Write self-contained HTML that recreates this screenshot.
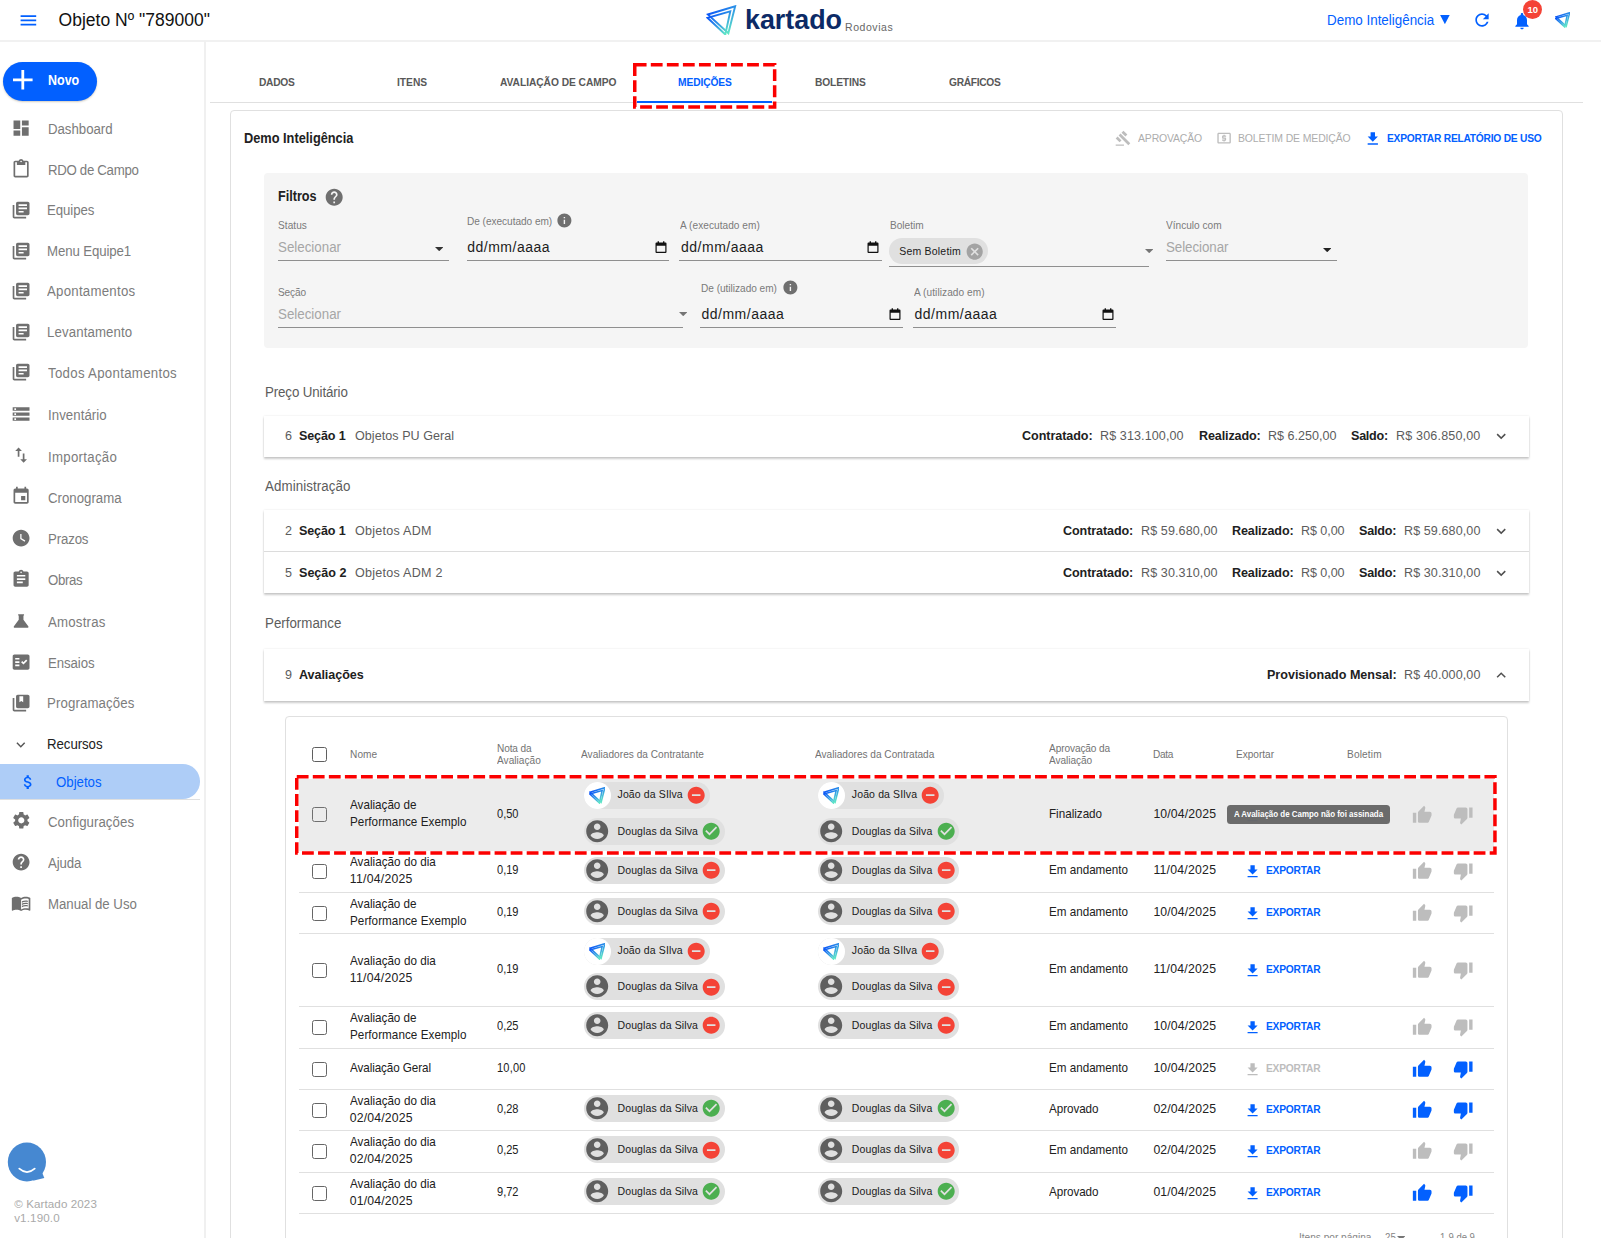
<!DOCTYPE html>
<html lang="pt-BR"><head><meta charset="utf-8"><title>Kartado - Objeto Nº "789000"</title>
<style>
html,body{margin:0;padding:0}
body{width:1601px;height:1238px;overflow:hidden;position:relative;background:#fff;font-family:"Liberation Sans",sans-serif;color:#212121}
#app div,#app span,#app svg{position:absolute}
#app div{box-sizing:border-box}
#app span{white-space:pre;transform-origin:0 50%}
#app{position:absolute;left:0;top:0;width:1601px;height:1238px;overflow:hidden}
</style></head>
<body>
<svg width="0" height="0" style="position:absolute"><defs><linearGradient id="lg" x1="0.05" y1="0.25" x2="0.75" y2="1"><stop offset="0" stop-color="#0b57f7"/><stop offset="0.5" stop-color="#2f97e6"/><stop offset="1" stop-color="#5fe6c6"/></linearGradient></defs></svg>
<div id="app">
<div style="left:0px;top:40px;width:1601px;height:2px;background:#f1f1f1"></div>
<svg style="left:17.8px;top:9.9px;" width="20.8" height="20.8" viewBox="0 0 24 24" fill="#0260ff"><path d="M3 18h18v-2H3v2zm0-5h18v-2H3v2zm0-7v2h18V6H3z"/></svg>
<span style="top:10px;font-size:17.5px;line-height:20px;left:58.6px;color:#111;letter-spacing:0.01px;">Objeto Nº "789000"</span>
<svg style="left:706.3px;top:4.9px" width="30.6" height="30.6" viewBox="0 0 32 32" fill="none" stroke="url(#lg)" stroke-width="2" stroke-linejoin="miter"><polygon points="1.900,9.900 30.500,1.300 23.400,29.600"/><polygon points="1.500,13.400 25.400,6.700 20.200,30.900"/></svg>
<span style="top:4px;font-size:28px;line-height:31px;left:744.5px;transform:scaleX(0.959);font-weight:700;color:#0c2a66;">kartado</span>
<span style="top:21px;font-size:10.5px;line-height:12px;left:845px;color:#666;letter-spacing:0.56px;">Rodovias</span>
<span style="top:12px;font-size:14px;line-height:16px;left:1327.3px;transform:scaleX(0.957);color:#0260ff;">Demo Inteligência</span>
<svg style="left:1440.200px;top:15px" width="9.800" height="9.200" viewBox="0 0 10 9.6"><polygon points="0,0 10,0 5,9.6" fill="#0260ff"/></svg>
<svg style="left:1472px;top:10.2px;" width="20" height="20" viewBox="0 0 24 24" fill="#0260ff"><path d="M17.650 6.350C16.200 4.900 14.210 4 12 4c-4.420 0-7.990 3.580-7.990 8s3.570 8 7.990 8c3.730 0 6.840-2.550 7.730-6h-2.080c-.820 2.330-3.040 4-5.650 4-3.310 0-6-2.690-6-6s2.690-6 6-6c1.660 0 3.140.690 4.220 1.780L13 11h7V4l-2.350 2.350z"/></svg>
<svg style="left:1512.2px;top:10.6px;" width="20" height="20" viewBox="0 0 24 24" fill="#0260ff"><path d="M12 22c1.100 0 2-.9 2-2h-4c0 1.100.890 2 2 2zm6-6v-5c0-3.070-1.640-5.640-4.500-6.320V4c0-.830-.670-1.500-1.500-1.500s-1.500.670-1.500 1.500v.680C7.630 5.360 6 7.920 6 11v5l-2 2v1h16v-1l-2-2z"/></svg>
<div style="left:1523.2px;top:0px;width:19px;height:19px;background:#f44336;border-radius:50%"></div>
<span style="top:4px;font-size:9.5px;line-height:11px;left:1532.7px;transform:translateX(-50%);font-weight:700;color:#fff;">10</span>
<svg style="left:1555px;top:12.3px" width="15.4" height="15.6" viewBox="0 0 32 32" fill="none" stroke="url(#lg)" stroke-width="3.2" stroke-linejoin="miter"><polygon points="1.900,9.900 30.500,1.300 23.400,29.600"/><polygon points="1.500,13.400 25.400,6.700 20.200,30.900"/></svg>
<div style="left:204px;top:41px;width:2px;height:1197px;background:#f0f0f0"></div>
<div style="left:2.6px;top:61.6px;width:94.6px;height:39.2px;background:#0260ff;border-radius:20px;box-shadow:0 1px 2px rgba(90,70,30,.28)"></div>
<svg style="left:6px;top:62.9px;" width="33.6" height="33.6" viewBox="0 0 24 24" fill="#fff"><path d="M19 13h-6v6h-2v-6H5v-2h6V5h2v6h6v2z"/></svg>
<span style="top:72px;font-size:14px;line-height:16px;left:47.8px;transform:scaleX(0.891);font-weight:700;color:#fff;letter-spacing:0px;">Novo</span>
<svg style="left:11.3px;top:117.5px;" width="20.2" height="20.2" viewBox="0 0 24 24" fill="#6f6f6f"><path d="M3 13h8V3H3v10zm0 8h8v-6H3v6zm10 0h8V11h-8v10zm0-18v6h8V3h-8z"/></svg>
<span style="top:121px;font-size:14px;line-height:16px;left:48px;transform:scaleX(0.945);color:#7c7c7c;letter-spacing:-0.02px;">Dashboard</span>
<svg style="left:11.3px;top:159px;" width="20.2" height="20.2" viewBox="0 0 24 24" fill="#6f6f6f"><path d="M19 2h-4.18C14.4.84 13.3 0 12 0c-1.3 0-2.4.84-2.82 2H5c-1.1 0-2 .9-2 2v16c0 1.1.9 2 2 2h14c1.1 0 2-.9 2-2V4c0-1.1-.9-2-2-2zm-7 0c.55 0 1 .45 1 1s-.45 1-1 1-1-.45-1-1 .45-1 1-1zm7 18H5V4h2v3h10V4h2v16z"/></svg>
<span style="top:162px;font-size:14px;line-height:16px;left:48px;transform:scaleX(0.945);color:#7c7c7c;letter-spacing:-0.32px;">RDO de Campo</span>
<svg style="left:11.3px;top:200.3px;" width="20.2" height="20.2" viewBox="0 0 24 24" fill="#6f6f6f"><path d="M4 6H2v14c0 1.1.9 2 2 2h14v-2H4V6zm16-4H8c-1.1 0-2 .9-2 2v12c0 1.1.9 2 2 2h12c1.1 0 2-.9 2-2V4c0-1.1-.9-2-2-2zm-1 9H9V9h10v2zm-4 4H9v-2h6v2zm4-8H9V5h10v2z"/></svg>
<span style="top:202px;font-size:14px;line-height:16px;left:46.7px;transform:scaleX(0.945);color:#7c7c7c;letter-spacing:-0.08px;">Equipes</span>
<svg style="left:11.3px;top:240.9px;" width="20.2" height="20.2" viewBox="0 0 24 24" fill="#6f6f6f"><path d="M4 6H2v14c0 1.1.9 2 2 2h14v-2H4V6zm16-4H8c-1.1 0-2 .9-2 2v12c0 1.1.9 2 2 2h12c1.1 0 2-.9 2-2V4c0-1.1-.9-2-2-2zm-1 9H9V9h10v2zm-4 4H9v-2h6v2zm4-8H9V5h10v2z"/></svg>
<span style="top:243px;font-size:14px;line-height:16px;left:46.7px;transform:scaleX(0.945);color:#7c7c7c;letter-spacing:-0.11px;">Menu Equipe1</span>
<svg style="left:11.3px;top:281px;" width="20.2" height="20.2" viewBox="0 0 24 24" fill="#6f6f6f"><path d="M4 6H2v14c0 1.1.9 2 2 2h14v-2H4V6zm16-4H8c-1.1 0-2 .9-2 2v12c0 1.1.9 2 2 2h12c1.1 0 2-.9 2-2V4c0-1.1-.9-2-2-2zm-1 9H9V9h10v2zm-4 4H9v-2h6v2zm4-8H9V5h10v2z"/></svg>
<span style="top:283px;font-size:14px;line-height:16px;left:46.7px;transform:scaleX(0.945);color:#7c7c7c;letter-spacing:0.27px;">Apontamentos</span>
<svg style="left:11.3px;top:322px;" width="20.2" height="20.2" viewBox="0 0 24 24" fill="#6f6f6f"><path d="M4 6H2v14c0 1.1.9 2 2 2h14v-2H4V6zm16-4H8c-1.1 0-2 .9-2 2v12c0 1.1.9 2 2 2h12c1.1 0 2-.9 2-2V4c0-1.1-.9-2-2-2zm-1 9H9V9h10v2zm-4 4H9v-2h6v2zm4-8H9V5h10v2z"/></svg>
<span style="top:324px;font-size:14px;line-height:16px;left:46.7px;transform:scaleX(0.945);color:#7c7c7c;letter-spacing:0.13px;">Levantamento</span>
<svg style="left:11.3px;top:362.4px;" width="20.2" height="20.2" viewBox="0 0 24 24" fill="#6f6f6f"><path d="M4 6H2v14c0 1.1.9 2 2 2h14v-2H4V6zm16-4H8c-1.1 0-2 .9-2 2v12c0 1.1.9 2 2 2h12c1.1 0 2-.9 2-2V4c0-1.1-.9-2-2-2zm-1 9H9V9h10v2zm-4 4H9v-2h6v2zm4-8H9V5h10v2z"/></svg>
<span style="top:365px;font-size:14px;line-height:16px;left:48px;transform:scaleX(0.945);color:#7c7c7c;letter-spacing:0.32px;">Todos Apontamentos</span>
<svg style="left:11.3px;top:404.1px;" width="20.2" height="20.2" viewBox="0 0 24 24" fill="#6f6f6f"><path d="M2 20h20v-4H2v4zm2-3h2v2H4v-2zM2 4v4h20V4H2zm4 3H4V5h2v2zm-4 7h20v-4H2v4zm2-3h2v2H4v-2z"/></svg>
<span style="top:407px;font-size:14px;line-height:16px;left:48px;transform:scaleX(0.945);color:#7c7c7c;letter-spacing:0.06px;">Inventário</span>
<svg style="left:11.3px;top:445.3px;" width="20.2" height="20.2" viewBox="0 0 24 24" fill="#6f6f6f"><path d="M9 3L5 6.99h3V14h2V6.99h3L9 3zm7 14.01V10h-2v7.01h-3L15 21l4-3.99h-3z"/></svg>
<span style="top:449px;font-size:14px;line-height:16px;left:48px;transform:scaleX(0.945);color:#7c7c7c;letter-spacing:0.31px;">Importação</span>
<svg style="left:11.3px;top:486.1px;" width="20.2" height="20.2" viewBox="0 0 24 24" fill="#6f6f6f"><path d="M17 12h-5v5h5v-5zM16 1v2H8V1H6v2H5c-1.11 0-1.99.9-1.99 2L3 19c0 1.1.89 2 2 2h14c1.1 0 2-.9 2-2V5c0-1.1-.9-2-2-2h-1V1h-2zm3 18H5V8h14v11z"/></svg>
<span style="top:490px;font-size:14px;line-height:16px;left:48px;transform:scaleX(0.945);color:#7c7c7c;letter-spacing:0.01px;">Cronograma</span>
<svg style="left:11.3px;top:527.7px;" width="20.2" height="20.2" viewBox="0 0 24 24" fill="#6f6f6f"><path d="M12 2C6.5 2 2 6.5 2 12s4.5 10 10 10 10-4.500 10-10S17.5 2 12 2zm4.2 14.2L11 13V7h1.5v5.2l4.500 2.700-.8 1.300z"/></svg>
<span style="top:531px;font-size:14px;line-height:16px;left:48px;transform:scaleX(0.945);color:#7c7c7c;letter-spacing:-0.15px;">Prazos</span>
<svg style="left:11.3px;top:568.9px;" width="20.2" height="20.2" viewBox="0 0 24 24" fill="#6f6f6f"><path d="M19 3h-4.18C14.4 1.84 13.3 1 12 1c-1.3 0-2.4.84-2.82 2H5c-1.1 0-2 .9-2 2v14c0 1.1.9 2 2 2h14c1.1 0 2-.9 2-2V5c0-1.1-.9-2-2-2zm-7 0c.55 0 1 .45 1 1s-.45 1-1 1-1-.45-1-1 .45-1 1-1zm2 14H7v-2h7v2zm3-4H7v-2h10v2zm0-4H7V7h10v2z"/></svg>
<span style="top:572px;font-size:14px;line-height:16px;left:48px;transform:scaleX(0.945);color:#7c7c7c;letter-spacing:-0.38px;">Obras</span>
<svg style="left:11.3px;top:610.9px;" width="20.2" height="20.2" viewBox="0 0 24 24" fill="#6f6f6f"><path d="M8.500 4h7v1.300h-.700v5l5.700 7.700c.700 1 0 2-1.200 2H4.700c-1.200 0-1.900-1-1.200-2l5.700-7.700v-5h-.700z"/></svg>
<span style="top:614px;font-size:14px;line-height:16px;left:48px;transform:scaleX(0.945);color:#7c7c7c;letter-spacing:0.22px;">Amostras</span>
<svg style="left:11.3px;top:652.1px;" width="20.2" height="20.2" viewBox="0 0 24 24" fill="#6f6f6f"><path d="M20 3H4c-1.1 0-2 .9-2 2v14c0 1.1.9 2 2 2h16c1.1 0 2-.9 2-2V5c0-1.1-.9-2-2-2zM10 17H5v-2h5v2zm0-4H5v-2h5v2zm0-4H5V7h5v2zm4.820 6L12 12.160l1.410-1.410 1.410 1.420L17.990 9l1.420 1.420L14.820 15z"/></svg>
<span style="top:655px;font-size:14px;line-height:16px;left:48px;transform:scaleX(0.945);color:#7c7c7c;letter-spacing:-0.09px;">Ensaios</span>
<svg style="left:11.3px;top:693.4px;" width="20.2" height="20.2" viewBox="0 0 24 24" fill="#6f6f6f"><path d="M4 6H2v14c0 1.100.900 2 2 2h14v-2H4V6zm16-4H8c-1.100 0-2 .900-2 2v12c0 1.100.900 2 2 2h12c1.100 0 2-.900 2-2V4c0-1.100-.900-2-2-2zm-5.500 9l-2.250-1.500L10 11V4h4.500v7z"/></svg>
<span style="top:695px;font-size:14px;line-height:16px;left:46.7px;transform:scaleX(0.945);color:#7c7c7c;letter-spacing:0.12px;">Programações</span>
<svg style="left:12px;top:735.5px;" width="17.6" height="17.6" viewBox="0 0 24 24" fill="#555"><path d="M16.590 8.590L12 13.170 7.410 8.590 6 10l6 6 6-6z"/></svg>
<span style="top:736px;font-size:14px;line-height:16px;left:46.7px;transform:scaleX(0.945);letter-spacing:-0.05px;">Recursos</span>
<div style="left:0px;top:764.3px;width:200.2px;height:34.6px;background:#aecdf7;border-radius:0 17.3px 17.3px 0"></div>
<svg style="left:19.4px;top:772.9px;" width="18.2" height="18.2" viewBox="0 0 24 24" fill="#0260ff"><path d="M11.8 10.9c-2.270-.590-3-1.200-3-2.150 0-1.090 1.010-1.850 2.700-1.850 1.780 0 2.440.850 2.500 2.100h2.210c-.070-1.720-1.120-3.300-3.210-3.810V3h-3v2.160c-1.940.420-3.500 1.680-3.500 3.610 0 2.310 1.910 3.460 4.700 4.130 2.500.600 3 1.480 3 2.410 0 .690-.490 1.790-2.700 1.790-2.060 0-2.870-.920-2.980-2.100h-2.200c.120 2.190 1.760 3.420 3.680 3.830V21h3v-2.150c1.950-.370 3.500-1.500 3.500-3.550 0-2.840-2.430-3.810-4.700-4.400z"/></svg>
<span style="top:774px;font-size:14px;line-height:16px;left:55.7px;transform:scaleX(0.945);color:#0260ff;">Objetos</span>
<div style="left:0px;top:799px;width:200.2px;height:1px;background:#e0e0e0"></div>
<svg style="left:11px;top:810.2px;" width="20.6" height="20.6" viewBox="0 0 24 24" fill="#6f6f6f"><path d="M19.140 12.940c.040-.300.060-.610.060-.940 0-.320-.020-.640-.070-.940l2.030-1.580c.180-.140.230-.410.120-.610l-1.920-3.320c-.120-.220-.370-.290-.590-.220l-2.390.960c-.500-.380-1.030-.700-1.620-.940l-.360-2.540c-.040-.240-.240-.410-.480-.410h-3.840c-.240 0-.430.170-.470.410l-.360 2.540c-.590.240-1.130.570-1.620.940l-2.390-.960c-.220-.080-.470 0-.590.220L2.740 8.870c-.120.210-.080.470.120.610l2.030 1.580c-.050.300-.090.630-.090.940s.020.640.070.940l-2.030 1.580c-.180.140-.230.410-.120.610l1.920 3.320c.120.220.370.290.590.220l2.390-.960c.500.380 1.030.700 1.620.940l.360 2.540c.050.240.240.410.480.410h3.840c.240 0 .440-.170.470-.410l.360-2.540c.590-.240 1.130-.560 1.620-.940l2.390.960c.220.080.470 0 .590-.220l1.920-3.320c.120-.220.070-.470-.120-.610l-2.010-1.580zM12 15.600c-1.980 0-3.600-1.620-3.600-3.600s1.620-3.600 3.600-3.600 3.600 1.620 3.600 3.600-1.620 3.600-3.600 3.600z"/></svg>
<span style="top:814px;font-size:14px;line-height:16px;left:48px;transform:scaleX(0.945);color:#7c7c7c;letter-spacing:0.06px;">Configurações</span>
<svg style="left:11.2px;top:851.6px;" width="20.2" height="20.2" viewBox="0 0 24 24" fill="#6f6f6f"><path d="M12 2C6.480 2 2 6.480 2 12s4.480 10 10 10 10-4.480 10-10S17.520 2 12 2zm1 17h-2v-2h2v2zm2.070-7.750l-.9.920C13.450 12.900 13 13.500 13 15h-2v-.5c0-1.100.450-2.100 1.170-2.830l1.240-1.260c.370-.360.590-.860.590-1.410 0-1.100-.9-2-2-2s-2 .9-2 2H8c0-2.210 1.790-4 4-4s4 1.790 4 4c0 .880-.360 1.680-.930 2.250z"/></svg>
<span style="top:855px;font-size:14px;line-height:16px;left:48px;transform:scaleX(0.945);color:#7c7c7c;letter-spacing:-0.15px;">Ajuda</span>
<svg style="left:11.3px;top:892.6px;" width="20.2" height="20.2" viewBox="0 0 24 24" fill="#6f6f6f"><path d="M21 5c-1.110-.350-2.330-.5-3.500-.5-1.950 0-4.050.4-5.500 1.500-1.450-1.100-3.550-1.500-5.500-1.500S2.450 4.900 1 6v14.650c0 .250.250.5.5.5.1 0 .150-.050.250-.050C3.100 20.450 5.050 20 6.500 20c1.950 0 4.050.4 5.500 1.500 1.350-.850 3.800-1.500 5.500-1.500 1.650 0 3.350.3 4.750 1.050.1.050.150.050.250.050.250 0 .5-.250.5-.5V6c-.6-.450-1.250-.750-2-1zm0 13.500c-1.100-.350-2.300-.5-3.500-.5-1.700 0-4.150.650-5.500 1.500V8c1.350-.850 3.800-1.500 5.500-1.500 1.200 0 2.400.150 3.500.5v11.500z M17.500 10.500c.880 0 1.730.090 2.500.260V9.240c-.790-.150-1.640-.240-2.500-.240-1.700 0-3.240.290-4.500.830v1.660c1.130-.640 2.700-.990 4.500-.990zM13 12.490v1.660c1.130-.640 2.700-.990 4.500-.990.880 0 1.730.090 2.500.260V11.900c-.790-.150-1.640-.240-2.500-.240-1.700 0-3.240.3-4.500.830zM17.500 14.330c-1.700 0-3.240.290-4.500.830v1.660c1.130-.640 2.700-.990 4.500-.990.880 0 1.730.090 2.500.260v-1.520c-.790-.160-1.640-.240-2.500-.240z"/></svg>
<span style="top:896px;font-size:14px;line-height:16px;left:48px;transform:scaleX(0.945);color:#7c7c7c;letter-spacing:-0.01px;">Manual de Uso</span>
<svg style="left:6px;top:1140px" width="44" height="44" viewBox="0 0 44 44"><ellipse cx="20.900" cy="22" rx="19.100" ry="19.600" fill="#4688d1"/><path d="M35.500 31 L38.300 37.900 L27 40.800 Z" fill="#4688d1"/><path d="M13.300 28.700 Q21 35.500 28.700 28.700" fill="none" stroke="#fff" stroke-width="1.800" stroke-linecap="round"/></svg>
<span style="top:1198px;font-size:11.6px;line-height:12px;left:14.2px;color:#a9a9a9;letter-spacing:0.1px;">© Kartado 2023</span>
<span style="top:1212px;font-size:11.6px;line-height:12px;left:14.2px;color:#a9a9a9;letter-spacing:0.14px;">v1.190.0</span>
<div style="left:209.7px;top:102px;width:1373.8px;height:1px;background:#e0e0e0"></div>
<span style="top:76px;font-size:11px;line-height:12px;left:259.3px;transform:scaleX(0.93);font-weight:700;color:#585858;letter-spacing:-0.3px;">DADOS</span>
<span style="top:76px;font-size:11px;line-height:12px;left:397.3px;transform:scaleX(0.93);font-weight:700;color:#585858;letter-spacing:0.01px;">ITENS</span>
<span style="top:76px;font-size:11px;line-height:12px;left:500.4px;transform:scaleX(0.93);font-weight:700;color:#585858;letter-spacing:-0.05px;">AVALIAÇÃO DE CAMPO</span>
<span style="top:76px;font-size:11px;line-height:12px;left:678.2px;transform:scaleX(0.93);font-weight:700;color:#0260ff;letter-spacing:-0.11px;">MEDIÇÕES</span>
<span style="top:76px;font-size:11px;line-height:12px;left:814.6px;transform:scaleX(0.93);font-weight:700;color:#585858;letter-spacing:-0.15px;">BOLETINS</span>
<span style="top:76px;font-size:11px;line-height:12px;left:949.2px;transform:scaleX(0.93);font-weight:700;color:#585858;letter-spacing:-0.33px;">GRÁFICOS</span>
<div style="left:637px;top:100.7px;width:135px;height:2px;background:#0260ff"></div>
<svg style="left:633.2px;top:63.2px" width="143.4" height="45.8"><rect x="1.75" y="1.75" width="139.9" height="42.3" fill="none" stroke="#fb0000" stroke-width="3.5" stroke-dasharray="11.8 4.25"/></svg>
<div style="left:230px;top:110px;width:1333px;height:1140px;border:1px solid #e0e0e0;border-radius:4px;background:#fff"></div>
<span style="top:130px;font-size:14px;line-height:16px;left:244.3px;transform:scaleX(0.913);font-weight:700;">Demo Inteligência</span>
<svg style="left:1114.95px;top:130.35px;" width="16.5" height="16.5" viewBox="0 0 24 24" fill="#bdbdbd"><path d="M1 21h12v2H1zM5.245 8.070l2.830-2.827 14.140 14.142-2.828 2.828zM12.317 1l5.657 5.656-2.830 2.830-5.654-5.660zM3.825 9.485l5.657 5.657-2.828 2.828-5.657-5.657z"/></svg>
<span style="top:132px;font-size:11px;line-height:12px;left:1137.6px;transform:scaleX(0.95);color:#adadad;letter-spacing:-0.16px;">APROVAÇÃO</span>
<svg style="left:1215.9px;top:130.3px;" width="16.2" height="16.2" viewBox="0 0 24 24" fill="#bdbdbd"><path d="M11 17h2v-1h1c.550 0 1-.450 1-1v-3c0-.550-.450-1-1-1h-3v-1h4V8h-2V7h-2v1h-1c-.550 0-1 .450-1 1v3c0 .550.450 1 1 1h3v1H9v2h2v1zm9-13H4c-1.110 0-1.990.890-1.990 2L2 18c0 1.110.890 2 2 2h16c1.110 0 2-.890 2-2V6c0-1.110-.890-2-2-2zm0 14H4V6h16v12z"/></svg>
<span style="top:132px;font-size:11px;line-height:12px;left:1238.3px;transform:scaleX(0.95);color:#adadad;letter-spacing:-0.14px;">BOLETIM DE MEDIÇÃO</span>
<svg style="left:1364px;top:130px;" width="17.6" height="17.6" viewBox="0 0 24 24" fill="#0260ff"><path d="M19 9h-4V3H9v6H5l7 7 7-7zM5 18v2h14v-2H5z"/></svg>
<span style="top:132px;font-size:11px;line-height:12px;left:1387.3px;transform:scaleX(0.93);font-weight:700;color:#0260ff;letter-spacing:-0.26px;">EXPORTAR RELATÓRIO DE USO</span>
<div style="left:264.4px;top:173.2px;width:1263.5px;height:175.2px;background:#f5f5f5;border-radius:4px"></div>
<span style="top:188px;font-size:14px;line-height:16px;left:277.8px;transform:scaleX(0.902);font-weight:700;">Filtros</span>
<svg style="left:324.4px;top:186.7px;" width="20.4" height="20.4" viewBox="0 0 24 24" fill="#6f6f6f"><path d="M12 2C6.480 2 2 6.480 2 12s4.480 10 10 10 10-4.480 10-10S17.520 2 12 2zm1 17h-2v-2h2v2zm2.070-7.750l-.9.920C13.450 12.900 13 13.500 13 15h-2v-.5c0-1.100.450-2.100 1.170-2.830l1.240-1.260c.370-.360.590-.860.590-1.410 0-1.100-.9-2-2-2s-2 .9-2 2H8c0-2.210 1.790-4 4-4s4 1.790 4 4c0 .880-.360 1.680-.930 2.250z"/></svg>
<span style="top:219px;font-size:10.5px;line-height:12px;left:277.8px;transform:scaleX(0.961);color:#7a7a7a;letter-spacing:0.05px;">Status</span>
<span style="top:239px;font-size:14px;line-height:16px;left:277.8px;transform:scaleX(0.952);color:#a6a6a6;">Selecionar</span>
<svg style="left:435px;top:247.3px" width="8.400" height="4.200" viewBox="0 0 10 5"><path d="M0 0h10L5 5z" fill="#333"/></svg>
<div style="left:277.8px;top:260px;width:171.6px;height:1px;background:#8f8f8f"></div>
<span style="top:215px;font-size:10.5px;line-height:12px;left:466.5px;transform:scaleX(0.961);color:#7a7a7a;letter-spacing:-0.04px;">De (executado em)</span>
<svg style="left:555.9px;top:212.4px;" width="16.8" height="16.8" viewBox="0 0 24 24" fill="#6f6f6f"><path d="M12 2C6.480 2 2 6.480 2 12s4.480 10 10 10 10-4.480 10-10S17.520 2 12 2zm1 15h-2v-6h2v6zm0-8h-2V7h2v2z"/></svg>
<span style="top:239px;font-size:14px;line-height:16px;left:467.2px;color:#1c1c1c;letter-spacing:0.51px;">dd/mm/aaaa</span>
<svg style="left:654.7px;top:240.6px" width="12" height="13" viewBox="0 0 12 13"><path d="M1.5 1.500h9a1 1 0 0 1 1 1v8.500a1 1 0 0 1-1 1h-9a1 1 0 0 1-1-1v-8.500a1 1 0 0 1 1-1zM1.700 4.800v6h8.600v-6z" fill="#111" fill-rule="evenodd"/><rect x="2.600" y="0.300" width="1.400" height="2" fill="#111"/><rect x="8" y="0.300" width="1.400" height="2" fill="#111"/></svg>
<div style="left:466.5px;top:260px;width:202.2px;height:1px;background:#8f8f8f"></div>
<span style="top:219px;font-size:10.5px;line-height:12px;left:679.9px;transform:scaleX(0.961);color:#7a7a7a;letter-spacing:0.05px;">A (executado em)</span>
<span style="top:239px;font-size:14px;line-height:16px;left:681px;color:#1c1c1c;letter-spacing:0.51px;">dd/mm/aaaa</span>
<svg style="left:867.4px;top:240.6px" width="12" height="13" viewBox="0 0 12 13"><path d="M1.5 1.500h9a1 1 0 0 1 1 1v8.500a1 1 0 0 1-1 1h-9a1 1 0 0 1-1-1v-8.500a1 1 0 0 1 1-1zM1.700 4.800v6h8.600v-6z" fill="#111" fill-rule="evenodd"/><rect x="2.600" y="0.300" width="1.400" height="2" fill="#111"/><rect x="8" y="0.300" width="1.400" height="2" fill="#111"/></svg>
<div style="left:679.1px;top:260px;width:202.6px;height:1px;background:#8f8f8f"></div>
<span style="top:219px;font-size:10.5px;line-height:12px;left:889.5px;transform:scaleX(0.961);color:#7a7a7a;letter-spacing:-0.01px;">Boletim</span>
<div style="left:888.8px;top:237.8px;width:99.1px;height:26.6px;background:#e0e0e0;border-radius:13.3px"></div>
<span style="top:245px;font-size:10.5px;line-height:12px;left:899.2px;color:#1a1a1a;letter-spacing:0.21px;">Sem Boletim</span>
<svg style="left:965.3px;top:241.5px;" width="19.4" height="19.4" viewBox="0 0 24 24" fill="#a3a3a3"><path d="M12 2C6.470 2 2 6.470 2 12s4.470 10 10 10 10-4.470 10-10S17.530 2 12 2zm5 13.590L15.590 17 12 13.410 8.410 17 7 15.590 10.590 12 7 8.410 8.410 7 12 10.590 15.590 7 17 8.410 13.410 12 17 15.590z"/></svg>
<svg style="left:1144.8px;top:249.3px" width="8.400" height="4.200" viewBox="0 0 10 5"><path d="M0 0h10L5 5z" fill="#757575"/></svg>
<div style="left:888.8px;top:266px;width:260.2px;height:1px;background:#8f8f8f"></div>
<span style="top:219px;font-size:10.5px;line-height:12px;left:1166.2px;transform:scaleX(0.961);color:#7a7a7a;letter-spacing:0.01px;">Vínculo com</span>
<span style="top:239px;font-size:14px;line-height:16px;left:1166.2px;transform:scaleX(0.952);color:#a6a6a6;letter-spacing:-0.06px;">Selecionar</span>
<svg style="left:1322.8px;top:247.9px" width="8.400" height="4.200" viewBox="0 0 10 5"><path d="M0 0h10L5 5z" fill="#222"/></svg>
<div style="left:1166.2px;top:260px;width:170.8px;height:1px;background:#8f8f8f"></div>
<span style="top:286px;font-size:10.5px;line-height:12px;left:277.8px;transform:scaleX(0.961);color:#7a7a7a;letter-spacing:-0.12px;">Seção</span>
<span style="top:306px;font-size:14px;line-height:16px;left:277.8px;transform:scaleX(0.952);color:#a6a6a6;">Selecionar</span>
<svg style="left:679.1px;top:312.2px" width="8.400" height="4.200" viewBox="0 0 10 5"><path d="M0 0h10L5 5z" fill="#757575"/></svg>
<div style="left:277.8px;top:327px;width:405.3px;height:1px;background:#8f8f8f"></div>
<span style="top:282px;font-size:10.5px;line-height:12px;left:700.7px;transform:scaleX(0.961);color:#7a7a7a;letter-spacing:-0.02px;">De (utilizado em)</span>
<svg style="left:781.7px;top:279px;" width="16.8" height="16.8" viewBox="0 0 24 24" fill="#6f6f6f"><path d="M12 2C6.480 2 2 6.480 2 12s4.480 10 10 10 10-4.480 10-10S17.520 2 12 2zm1 15h-2v-6h2v6zm0-8h-2V7h2v2z"/></svg>
<span style="top:306px;font-size:14px;line-height:16px;left:701.4px;color:#1c1c1c;letter-spacing:0.51px;">dd/mm/aaaa</span>
<svg style="left:888.5px;top:307.6px" width="12" height="13" viewBox="0 0 12 13"><path d="M1.5 1.500h9a1 1 0 0 1 1 1v8.500a1 1 0 0 1-1 1h-9a1 1 0 0 1-1-1v-8.500a1 1 0 0 1 1-1zM1.700 4.800v6h8.600v-6z" fill="#111" fill-rule="evenodd"/><rect x="2.600" y="0.300" width="1.400" height="2" fill="#111"/><rect x="8" y="0.300" width="1.400" height="2" fill="#111"/></svg>
<div style="left:700.1px;top:327px;width:202.6px;height:1px;background:#8f8f8f"></div>
<span style="top:286px;font-size:10.5px;line-height:12px;left:913.9px;transform:scaleX(0.961);color:#7a7a7a;letter-spacing:0.07px;">A (utilizado em)</span>
<span style="top:306px;font-size:14px;line-height:16px;left:914.5px;color:#1c1c1c;letter-spacing:0.51px;">dd/mm/aaaa</span>
<svg style="left:1101.6px;top:307.6px" width="12" height="13" viewBox="0 0 12 13"><path d="M1.5 1.500h9a1 1 0 0 1 1 1v8.500a1 1 0 0 1-1 1h-9a1 1 0 0 1-1-1v-8.500a1 1 0 0 1 1-1zM1.700 4.800v6h8.600v-6z" fill="#111" fill-rule="evenodd"/><rect x="2.600" y="0.300" width="1.400" height="2" fill="#111"/><rect x="8" y="0.300" width="1.400" height="2" fill="#111"/></svg>
<div style="left:913.1px;top:327px;width:203.1px;height:1px;background:#8f8f8f"></div>
<span style="top:384px;font-size:14px;line-height:16px;left:264.9px;transform:scaleX(0.952);color:#5c5c5c;letter-spacing:-0.13px;">Preço Unitário</span>
<span style="top:478px;font-size:14px;line-height:16px;left:264.9px;transform:scaleX(0.952);color:#5c5c5c;letter-spacing:0.08px;">Administração</span>
<span style="top:615px;font-size:14px;line-height:16px;left:264.9px;transform:scaleX(0.952);color:#5c5c5c;">Performance</span>
<div style="left:264.4px;top:416px;width:1264.2px;height:40.6px;box-shadow:0 2px 2px rgba(0,0,0,.2),0 0 2px rgba(0,0,0,.1);background:#fff"></div>
<div style="left:264.4px;top:510.4px;width:1264.2px;height:82.4px;box-shadow:0 2px 2px rgba(0,0,0,.2),0 0 2px rgba(0,0,0,.1);background:#fff"></div>
<div style="left:264.4px;top:551px;width:1264.2px;height:1px;background:#dcdcdc"></div>
<div style="left:264.4px;top:648.6px;width:1264.2px;height:52.6px;box-shadow:0 2px 2px rgba(0,0,0,.2),0 0 2px rgba(0,0,0,.1);background:#fff"></div>
<span style="top:428px;font-size:13.12px;line-height:15px;left:284.7px;transform:scaleX(0.958);color:#5c5c5c;letter-spacing:0.01px;">6</span>
<span style="top:428px;font-size:13.12px;line-height:15px;left:299.4px;transform:scaleX(0.958);font-weight:700;letter-spacing:-0.14px;">Seção 1</span>
<span style="top:428px;font-size:13.12px;line-height:15px;left:354.5px;transform:scaleX(0.958);color:#5c5c5c;letter-spacing:0.05px;">Objetos PU Geral</span>
<span style="top:428px;font-size:13.12px;line-height:15px;left:1021.7px;transform:scaleX(0.958);font-weight:700;letter-spacing:-0.05px;">Contratado:</span>
<span style="top:428px;font-size:13.12px;line-height:15px;left:1100.4px;transform:scaleX(0.958);color:#5c5c5c;letter-spacing:0.1px;">R$ 313.100,00</span>
<span style="top:428px;font-size:13.12px;line-height:15px;left:1198.5px;transform:scaleX(0.958);font-weight:700;letter-spacing:-0.13px;">Realizado:</span>
<span style="top:428px;font-size:13.12px;line-height:15px;left:1268.4px;transform:scaleX(0.958);color:#5c5c5c;letter-spacing:0.01px;">R$ 6.250,00</span>
<span style="top:428px;font-size:13.12px;line-height:15px;left:1351.4px;transform:scaleX(0.958);font-weight:700;letter-spacing:-0.26px;">Saldo:</span>
<span style="top:428px;font-size:13.12px;line-height:15px;left:1396.3px;transform:scaleX(0.958);color:#5c5c5c;letter-spacing:0.17px;">R$ 306.850,00</span>
<svg style="left:1491.8px;top:426.8px;" width="18.4" height="18.4" viewBox="0 0 24 24" fill="#505050"><path d="M16.590 8.590L12 13.170 7.410 8.590 6 10l6 6 6-6z"/></svg>
<span style="top:523px;font-size:13.12px;line-height:15px;left:284.7px;transform:scaleX(0.958);color:#5c5c5c;letter-spacing:0.01px;">2</span>
<span style="top:523px;font-size:13.12px;line-height:15px;left:299.4px;transform:scaleX(0.958);font-weight:700;letter-spacing:-0.14px;">Seção 1</span>
<span style="top:523px;font-size:13.12px;line-height:15px;left:354.5px;transform:scaleX(0.958);color:#5c5c5c;letter-spacing:0.26px;">Objetos ADM</span>
<span style="top:523px;font-size:13.12px;line-height:15px;left:1062.7px;transform:scaleX(0.958);font-weight:700;letter-spacing:-0.09px;">Contratado:</span>
<span style="top:523px;font-size:13.12px;line-height:15px;left:1140.9px;transform:scaleX(0.958);color:#5c5c5c;letter-spacing:0.1px;">R$ 59.680,00</span>
<span style="top:523px;font-size:13.12px;line-height:15px;left:1231.9px;transform:scaleX(0.958);font-weight:700;letter-spacing:-0.14px;">Realizado:</span>
<span style="top:523px;font-size:13.12px;line-height:15px;left:1301.4px;transform:scaleX(0.958);color:#5c5c5c;letter-spacing:-0.08px;">R$ 0,00</span>
<span style="top:523px;font-size:13.12px;line-height:15px;left:1359px;transform:scaleX(0.958);font-weight:700;letter-spacing:-0.2px;">Saldo:</span>
<span style="top:523px;font-size:13.12px;line-height:15px;left:1404.3px;transform:scaleX(0.958);color:#5c5c5c;letter-spacing:0.09px;">R$ 59.680,00</span>
<svg style="left:1491.8px;top:521.8px;" width="18.4" height="18.4" viewBox="0 0 24 24" fill="#505050"><path d="M16.590 8.590L12 13.170 7.410 8.590 6 10l6 6 6-6z"/></svg>
<span style="top:565px;font-size:13.12px;line-height:15px;left:284.7px;transform:scaleX(0.958);color:#5c5c5c;letter-spacing:0.01px;">5</span>
<span style="top:565px;font-size:13.12px;line-height:15px;left:299.4px;transform:scaleX(0.958);font-weight:700;">Seção 2</span>
<span style="top:565px;font-size:13.12px;line-height:15px;left:354.5px;transform:scaleX(0.958);color:#5c5c5c;letter-spacing:0.26px;">Objetos ADM 2</span>
<span style="top:565px;font-size:13.12px;line-height:15px;left:1062.7px;transform:scaleX(0.958);font-weight:700;letter-spacing:-0.09px;">Contratado:</span>
<span style="top:565px;font-size:13.12px;line-height:15px;left:1140.9px;transform:scaleX(0.958);color:#5c5c5c;letter-spacing:0.1px;">R$ 30.310,00</span>
<span style="top:565px;font-size:13.12px;line-height:15px;left:1231.9px;transform:scaleX(0.958);font-weight:700;letter-spacing:-0.14px;">Realizado:</span>
<span style="top:565px;font-size:13.12px;line-height:15px;left:1301.4px;transform:scaleX(0.958);color:#5c5c5c;letter-spacing:-0.08px;">R$ 0,00</span>
<span style="top:565px;font-size:13.12px;line-height:15px;left:1359px;transform:scaleX(0.958);font-weight:700;letter-spacing:-0.2px;">Saldo:</span>
<span style="top:565px;font-size:13.12px;line-height:15px;left:1404.3px;transform:scaleX(0.958);color:#5c5c5c;letter-spacing:0.09px;">R$ 30.310,00</span>
<svg style="left:1491.8px;top:563.8px;" width="18.4" height="18.4" viewBox="0 0 24 24" fill="#505050"><path d="M16.590 8.590L12 13.170 7.410 8.590 6 10l6 6 6-6z"/></svg>
<span style="top:667px;font-size:13.12px;line-height:15px;left:284.7px;transform:scaleX(0.958);color:#5c5c5c;letter-spacing:0.01px;">9</span>
<span style="top:667px;font-size:13.12px;line-height:15px;left:299.4px;transform:scaleX(0.958);font-weight:700;letter-spacing:-0.05px;">Avaliações</span>
<span style="top:667px;font-size:13.12px;line-height:15px;left:1266.6px;transform:scaleX(0.958);font-weight:700;letter-spacing:-0.01px;">Provisionado Mensal:</span>
<span style="top:667px;font-size:13.12px;line-height:15px;left:1404.3px;transform:scaleX(0.958);color:#5c5c5c;letter-spacing:0.09px;">R$ 40.000,00</span>
<svg style="left:1491.8px;top:665.8px;" width="18.4" height="18.4" viewBox="0 0 24 24" fill="#505050"><path d="M12 8l-6 6 1.410 1.410L12 10.830l4.590 4.580L18 14z"/></svg>
<div style="left:285px;top:716px;width:1223px;height:540px;border:1px solid #e0e0e0;border-radius:4px;background:#fff"></div>
<div style="left:312px;top:746.7px;width:14.9px;height:15px;border:1.700px solid #5f5f5f;border-radius:2.500px"></div>
<span style="top:748px;font-size:10.5px;line-height:12px;left:349.8px;transform:scaleX(0.961);color:#737373;letter-spacing:0.11px;">Nome</span>
<span style="top:742px;font-size:10.5px;line-height:12px;left:497.2px;transform:scaleX(0.961);color:#737373;letter-spacing:-0.12px;">Nota da</span>
<span style="top:754px;font-size:10.5px;line-height:12px;left:497.2px;transform:scaleX(0.961);color:#737373;letter-spacing:0.03px;">Avaliação</span>
<span style="top:748px;font-size:10.5px;line-height:12px;left:580.5px;transform:scaleX(0.961);color:#737373;letter-spacing:0.03px;">Avaliadores da Contratante</span>
<span style="top:748px;font-size:10.5px;line-height:12px;left:814.8px;transform:scaleX(0.961);color:#737373;">Avaliadores da Contratada</span>
<span style="top:742px;font-size:10.5px;line-height:12px;left:1049.4px;transform:scaleX(0.961);color:#737373;letter-spacing:-0.1px;">Aprovação da</span>
<span style="top:754px;font-size:10.5px;line-height:12px;left:1049.4px;transform:scaleX(0.961);color:#737373;letter-spacing:-0.06px;">Avaliação</span>
<span style="top:748px;font-size:10.5px;line-height:12px;left:1153.4px;transform:scaleX(0.961);color:#737373;letter-spacing:-0.3px;">Data</span>
<span style="top:748px;font-size:10.5px;line-height:12px;left:1236.4px;transform:scaleX(0.961);color:#737373;letter-spacing:-0.01px;">Exportar</span>
<span style="top:748px;font-size:10.5px;line-height:12px;left:1347px;transform:scaleX(0.961);color:#737373;letter-spacing:0.17px;">Boletim</span>
<div style="left:298.9px;top:778.5px;width:1194.9px;height:72.9px;background:#ececec"></div>
<div style="left:312px;top:806.8px;width:14.9px;height:15px;border:1.700px solid #707070;border-radius:2.500px"></div>
<span style="top:798px;font-size:12.25px;line-height:14px;left:349.8px;transform:scaleX(0.952);">Avaliação de</span>
<span style="top:815px;font-size:12.25px;line-height:14px;left:349.8px;transform:scaleX(0.952);letter-spacing:0.06px;">Performance Exemplo</span>
<span style="top:807px;font-size:12.25px;line-height:14px;left:497.2px;transform:scaleX(0.902);">0,50</span>
<div style="left:584px;top:782px;width:125.6px;height:27px;background:#e0e0e0;border-radius:13.500px"></div>
<div style="left:584px;top:782px;width:27px;height:27px;background:#fff;border-radius:50%"></div>
<svg style="left:588.6px;top:787.2px" width="16.6" height="16.6" viewBox="0 0 32 32" fill="none" stroke="url(#lg)" stroke-width="3" stroke-linejoin="miter"><polygon points="1.900,9.900 30.500,1.300 23.400,29.600"/><polygon points="1.500,13.400 25.400,6.700 20.200,30.900"/></svg>
<span style="top:788px;font-size:10.5px;line-height:12px;left:617.5px;color:#1a1a1a;letter-spacing:0.13px;">João da SIlva</span>
<svg style="left:686.1px;top:785.4px;" width="20.4" height="20.4" viewBox="0 0 24 24" fill="#f44336"><path d="M12 2C6.480 2 2 6.480 2 12s4.480 10 10 10 10-4.480 10-10S17.520 2 12 2zm5 11H7v-2h10v2z"/></svg>
<div style="left:818.3px;top:782px;width:125.6px;height:27px;background:#e0e0e0;border-radius:13.500px"></div>
<div style="left:818.3px;top:782px;width:27px;height:27px;background:#fff;border-radius:50%"></div>
<svg style="left:822.9px;top:787.2px" width="16.6" height="16.6" viewBox="0 0 32 32" fill="none" stroke="url(#lg)" stroke-width="3" stroke-linejoin="miter"><polygon points="1.900,9.900 30.500,1.300 23.400,29.600"/><polygon points="1.500,13.400 25.400,6.700 20.200,30.900"/></svg>
<span style="top:788px;font-size:10.5px;line-height:12px;left:851.8px;color:#1a1a1a;letter-spacing:0.13px;">João da SIlva</span>
<svg style="left:920.4px;top:785.4px;" width="20.4" height="20.4" viewBox="0 0 24 24" fill="#f44336"><path d="M12 2C6.480 2 2 6.480 2 12s4.480 10 10 10 10-4.480 10-10S17.520 2 12 2zm5 11H7v-2h10v2z"/></svg>
<div style="left:584px;top:818px;width:140.8px;height:27px;background:#e0e0e0;border-radius:13.500px"></div>
<svg style="left:584px;top:817.9px;" width="26.4" height="26.4" viewBox="0 0 24 24" fill="#5f5f5f"><path d="M12 2C6.480 2 2 6.480 2 12s4.480 10 10 10 10-4.480 10-10S17.520 2 12 2zm0 3c1.660 0 3 1.340 3 3s-1.340 3-3 3-3-1.340-3-3 1.340-3 3-3zm0 14.200c-2.500 0-4.710-1.280-6-3.220.030-1.990 4-3.080 6-3.080 1.990 0 5.970 1.090 6 3.080-1.290 1.940-3.500 3.220-6 3.220z"/></svg>
<span style="top:825px;font-size:10.5px;line-height:12px;left:617.5px;color:#1a1a1a;letter-spacing:0.11px;">Douglas da Silva</span>
<svg style="left:701.3px;top:821.2px;" width="20.4" height="20.4" viewBox="0 0 24 24" fill="#4caf50"><path d="M12 2C6.480 2 2 6.480 2 12s4.480 10 10 10 10-4.480 10-10S17.520 2 12 2zm-2 15l-5-5 1.410-1.410L10 14.170l7.590-7.590L19 8l-9 9z"/></svg>
<div style="left:818.3px;top:818px;width:140.8px;height:27px;background:#e0e0e0;border-radius:13.500px"></div>
<svg style="left:818.3px;top:817.9px;" width="26.4" height="26.4" viewBox="0 0 24 24" fill="#5f5f5f"><path d="M12 2C6.480 2 2 6.480 2 12s4.480 10 10 10 10-4.480 10-10S17.520 2 12 2zm0 3c1.660 0 3 1.340 3 3s-1.340 3-3 3-3-1.340-3-3 1.340-3 3-3zm0 14.200c-2.500 0-4.710-1.280-6-3.220.030-1.990 4-3.080 6-3.080 1.990 0 5.970 1.090 6 3.080-1.290 1.940-3.500 3.220-6 3.220z"/></svg>
<span style="top:825px;font-size:10.5px;line-height:12px;left:851.8px;color:#1a1a1a;letter-spacing:0.11px;">Douglas da Silva</span>
<svg style="left:935.6px;top:821.2px;" width="20.4" height="20.4" viewBox="0 0 24 24" fill="#4caf50"><path d="M12 2C6.480 2 2 6.480 2 12s4.480 10 10 10 10-4.480 10-10S17.520 2 12 2zm-2 15l-5-5 1.410-1.410L10 14.170l7.590-7.590L19 8l-9 9z"/></svg>
<span style="top:807px;font-size:12.25px;line-height:14px;left:1049.4px;transform:scaleX(0.952);letter-spacing:-0.01px;">Finalizado</span>
<span style="top:807px;font-size:12.25px;line-height:14px;left:1153.4px;letter-spacing:0.15px;">10/04/2025</span>
<svg style="left:1243.6px;top:807.1px;" width="17.2" height="17.2" viewBox="0 0 24 24" fill="#9db9e6"><path d="M19 9h-4V3H9v6H5l7 7 7-7zM5 18v2h14v-2H5z"/></svg>
<span style="top:808px;font-size:11px;line-height:12px;left:1265.8px;transform:scaleX(0.93);font-weight:700;color:#9db9e6;letter-spacing:-0.23px;">EXPORTAR</span>
<div style="left:1227.4px;top:805px;width:162.4px;height:18.5px;background:rgba(97,97,97,.93);border-radius:3.500px"></div>
<span style="top:809px;font-size:8.75px;line-height:10px;left:1233.9px;transform:scaleX(0.907);font-weight:700;color:#fff;">A Avaliação de Campo não foi assinada</span>
<svg style="left:1412.3px;top:805.45px;" width="20.4" height="20.4" viewBox="0 0 24 24" fill="#bdbdbd"><path d="M1 21h4V9H1v12zm22-11c0-1.100-.9-2-2-2h-6.310l.950-4.570.030-.320c0-.410-.170-.790-.440-1.060L14.170 1 7.590 7.590C7.220 7.950 7 8.450 7 9v10c0 1.100.9 2 2 2h9c.830 0 1.540-.5 1.840-1.220l3.020-7.050c.090-.230.140-.470.140-.730v-2z"/></svg>
<svg style="left:1453.1px;top:805.3px;" width="20.4" height="20.4" viewBox="0 0 24 24" fill="#bdbdbd"><path d="M15 3H6c-.830 0-1.540.5-1.840 1.220l-3.020 7.050c-.090.230-.140.470-.140.730v2c0 1.100.9 2 2 2h6.310l-.950 4.570-.030.320c0 .410.170.790.440 1.060L9.830 23l6.590-6.590c.360-.360.580-.860.580-1.410V5c0-1.100-.9-2-2-2zm4 0v12h4V3h-4z"/></svg>
<div style="left:298.9px;top:892px;width:1194.9px;height:1px;background:#e0e0e0"></div>
<div style="left:312px;top:863.7px;width:14.9px;height:15px;border:1.700px solid #666;border-radius:2.500px"></div>
<span style="top:855px;font-size:12.25px;line-height:14px;left:349.8px;transform:scaleX(0.952);letter-spacing:0.03px;">Avaliação do dia</span>
<span style="top:872px;font-size:12.25px;line-height:14px;left:349.8px;letter-spacing:0.24px;">11/04/2025</span>
<span style="top:863px;font-size:12.25px;line-height:14px;left:497.2px;transform:scaleX(0.902);">0,19</span>
<div style="left:584px;top:856.7px;width:140.8px;height:27px;background:#e0e0e0;border-radius:13.500px"></div>
<svg style="left:584px;top:856.6px;" width="26.4" height="26.4" viewBox="0 0 24 24" fill="#5f5f5f"><path d="M12 2C6.480 2 2 6.480 2 12s4.480 10 10 10 10-4.480 10-10S17.520 2 12 2zm0 3c1.660 0 3 1.340 3 3s-1.340 3-3 3-3-1.340-3-3 1.340-3 3-3zm0 14.200c-2.500 0-4.710-1.280-6-3.220.030-1.990 4-3.080 6-3.080 1.990 0 5.970 1.090 6 3.080-1.290 1.940-3.500 3.220-6 3.220z"/></svg>
<span style="top:864px;font-size:10.5px;line-height:12px;left:617.5px;color:#1a1a1a;letter-spacing:0.11px;">Douglas da Silva</span>
<svg style="left:701.3px;top:860.1px;" width="20.4" height="20.4" viewBox="0 0 24 24" fill="#f44336"><path d="M12 2C6.480 2 2 6.480 2 12s4.480 10 10 10 10-4.480 10-10S17.520 2 12 2zm5 11H7v-2h10v2z"/></svg>
<div style="left:818.3px;top:856.7px;width:140.8px;height:27px;background:#e0e0e0;border-radius:13.500px"></div>
<svg style="left:818.3px;top:856.6px;" width="26.4" height="26.4" viewBox="0 0 24 24" fill="#5f5f5f"><path d="M12 2C6.480 2 2 6.480 2 12s4.480 10 10 10 10-4.480 10-10S17.520 2 12 2zm0 3c1.660 0 3 1.340 3 3s-1.340 3-3 3-3-1.340-3-3 1.340-3 3-3zm0 14.200c-2.500 0-4.710-1.280-6-3.220.030-1.990 4-3.080 6-3.080 1.990 0 5.970 1.090 6 3.080-1.290 1.940-3.500 3.220-6 3.220z"/></svg>
<span style="top:864px;font-size:10.5px;line-height:12px;left:851.8px;color:#1a1a1a;letter-spacing:0.11px;">Douglas da Silva</span>
<svg style="left:935.6px;top:860.1px;" width="20.4" height="20.4" viewBox="0 0 24 24" fill="#f44336"><path d="M12 2C6.480 2 2 6.480 2 12s4.480 10 10 10 10-4.480 10-10S17.520 2 12 2zm5 11H7v-2h10v2z"/></svg>
<span style="top:863px;font-size:12.25px;line-height:14px;left:1049.4px;transform:scaleX(0.952);letter-spacing:-0.01px;">Em andamento</span>
<span style="top:863px;font-size:12.25px;line-height:14px;left:1153.4px;letter-spacing:0.24px;">11/04/2025</span>
<svg style="left:1243.6px;top:863.1px;" width="17.2" height="17.2" viewBox="0 0 24 24" fill="#0260ff"><path d="M19 9h-4V3H9v6H5l7 7 7-7zM5 18v2h14v-2H5z"/></svg>
<span style="top:864px;font-size:11px;line-height:12px;left:1265.8px;transform:scaleX(0.93);font-weight:700;color:#0260ff;letter-spacing:-0.23px;">EXPORTAR</span>
<svg style="left:1412.3px;top:861.45px;" width="20.4" height="20.4" viewBox="0 0 24 24" fill="#bdbdbd"><path d="M1 21h4V9H1v12zm22-11c0-1.100-.9-2-2-2h-6.310l.950-4.570.030-.320c0-.410-.170-.790-.440-1.060L14.170 1 7.590 7.590C7.220 7.950 7 8.450 7 9v10c0 1.100.9 2 2 2h9c.830 0 1.540-.5 1.840-1.220l3.020-7.050c.090-.230.140-.470.140-.730v-2z"/></svg>
<svg style="left:1453.1px;top:861.3px;" width="20.4" height="20.4" viewBox="0 0 24 24" fill="#bdbdbd"><path d="M15 3H6c-.830 0-1.540.5-1.840 1.220l-3.020 7.050c-.090.230-.140.470-.140.730v2c0 1.100.9 2 2 2h6.310l-.950 4.570-.030.320c0 .410.170.790.440 1.060L9.830 23l6.590-6.590c.360-.360.580-.860.580-1.410V5c0-1.100-.9-2-2-2zm4 0v12h4V3h-4z"/></svg>
<div style="left:298.9px;top:933.4px;width:1194.9px;height:1px;background:#e0e0e0"></div>
<div style="left:312px;top:905.7px;width:14.9px;height:15px;border:1.700px solid #666;border-radius:2.500px"></div>
<span style="top:897px;font-size:12.25px;line-height:14px;left:349.8px;transform:scaleX(0.952);">Avaliação de</span>
<span style="top:914px;font-size:12.25px;line-height:14px;left:349.8px;transform:scaleX(0.952);letter-spacing:0.06px;">Performance Exemplo</span>
<span style="top:905px;font-size:12.25px;line-height:14px;left:497.2px;transform:scaleX(0.902);">0,19</span>
<div style="left:584px;top:897.9px;width:140.8px;height:27px;background:#e0e0e0;border-radius:13.500px"></div>
<svg style="left:584px;top:897.8px;" width="26.4" height="26.4" viewBox="0 0 24 24" fill="#5f5f5f"><path d="M12 2C6.480 2 2 6.480 2 12s4.480 10 10 10 10-4.480 10-10S17.520 2 12 2zm0 3c1.660 0 3 1.340 3 3s-1.340 3-3 3-3-1.340-3-3 1.340-3 3-3zm0 14.200c-2.500 0-4.710-1.280-6-3.220.030-1.990 4-3.080 6-3.080 1.990 0 5.970 1.090 6 3.080-1.290 1.940-3.500 3.220-6 3.220z"/></svg>
<span style="top:905px;font-size:10.5px;line-height:12px;left:617.5px;color:#1a1a1a;letter-spacing:0.11px;">Douglas da Silva</span>
<svg style="left:701.3px;top:901.3px;" width="20.4" height="20.4" viewBox="0 0 24 24" fill="#f44336"><path d="M12 2C6.480 2 2 6.480 2 12s4.480 10 10 10 10-4.480 10-10S17.520 2 12 2zm5 11H7v-2h10v2z"/></svg>
<div style="left:818.3px;top:897.9px;width:140.8px;height:27px;background:#e0e0e0;border-radius:13.500px"></div>
<svg style="left:818.3px;top:897.8px;" width="26.4" height="26.4" viewBox="0 0 24 24" fill="#5f5f5f"><path d="M12 2C6.480 2 2 6.480 2 12s4.480 10 10 10 10-4.480 10-10S17.520 2 12 2zm0 3c1.660 0 3 1.340 3 3s-1.340 3-3 3-3-1.340-3-3 1.340-3 3-3zm0 14.200c-2.500 0-4.710-1.280-6-3.220.030-1.990 4-3.080 6-3.080 1.990 0 5.970 1.090 6 3.080-1.290 1.940-3.500 3.220-6 3.220z"/></svg>
<span style="top:905px;font-size:10.5px;line-height:12px;left:851.8px;color:#1a1a1a;letter-spacing:0.11px;">Douglas da Silva</span>
<svg style="left:935.6px;top:901.3px;" width="20.4" height="20.4" viewBox="0 0 24 24" fill="#f44336"><path d="M12 2C6.480 2 2 6.480 2 12s4.480 10 10 10 10-4.480 10-10S17.520 2 12 2zm5 11H7v-2h10v2z"/></svg>
<span style="top:905px;font-size:12.25px;line-height:14px;left:1049.4px;transform:scaleX(0.952);letter-spacing:-0.01px;">Em andamento</span>
<span style="top:905px;font-size:12.25px;line-height:14px;left:1153.4px;letter-spacing:0.15px;">10/04/2025</span>
<svg style="left:1243.6px;top:905.1px;" width="17.2" height="17.2" viewBox="0 0 24 24" fill="#0260ff"><path d="M19 9h-4V3H9v6H5l7 7 7-7zM5 18v2h14v-2H5z"/></svg>
<span style="top:906px;font-size:11px;line-height:12px;left:1265.8px;transform:scaleX(0.93);font-weight:700;color:#0260ff;letter-spacing:-0.23px;">EXPORTAR</span>
<svg style="left:1412.3px;top:903.45px;" width="20.4" height="20.4" viewBox="0 0 24 24" fill="#bdbdbd"><path d="M1 21h4V9H1v12zm22-11c0-1.100-.9-2-2-2h-6.310l.950-4.570.030-.320c0-.410-.170-.790-.440-1.060L14.170 1 7.590 7.590C7.220 7.950 7 8.450 7 9v10c0 1.100.9 2 2 2h9c.830 0 1.540-.5 1.840-1.220l3.020-7.050c.090-.230.140-.470.140-.730v-2z"/></svg>
<svg style="left:1453.1px;top:903.3px;" width="20.4" height="20.4" viewBox="0 0 24 24" fill="#bdbdbd"><path d="M15 3H6c-.830 0-1.540.5-1.840 1.220l-3.020 7.050c-.090.230-.140.470-.140.730v2c0 1.100.9 2 2 2h6.310l-.950 4.570-.030.320c0 .410.170.790.440 1.060L9.830 23l6.590-6.590c.360-.360.580-.860.580-1.410V5c0-1.100-.9-2-2-2zm4 0v12h4V3h-4z"/></svg>
<div style="left:298.9px;top:1006px;width:1194.9px;height:1px;background:#e0e0e0"></div>
<div style="left:312px;top:962.7px;width:14.9px;height:15px;border:1.700px solid #666;border-radius:2.500px"></div>
<span style="top:954px;font-size:12.25px;line-height:14px;left:349.8px;transform:scaleX(0.952);letter-spacing:0.03px;">Avaliação do dia</span>
<span style="top:971px;font-size:12.25px;line-height:14px;left:349.8px;letter-spacing:0.24px;">11/04/2025</span>
<span style="top:962px;font-size:12.25px;line-height:14px;left:497.2px;transform:scaleX(0.902);">0,19</span>
<div style="left:584px;top:938px;width:125.6px;height:27px;background:#e0e0e0;border-radius:13.500px"></div>
<div style="left:584px;top:938px;width:27px;height:27px;background:#fff;border-radius:50%"></div>
<svg style="left:588.6px;top:943.2px" width="16.6" height="16.6" viewBox="0 0 32 32" fill="none" stroke="url(#lg)" stroke-width="3" stroke-linejoin="miter"><polygon points="1.900,9.900 30.500,1.300 23.400,29.600"/><polygon points="1.500,13.400 25.400,6.700 20.200,30.900"/></svg>
<span style="top:944px;font-size:10.5px;line-height:12px;left:617.5px;color:#1a1a1a;letter-spacing:0.13px;">João da SIlva</span>
<svg style="left:686.1px;top:941.4px;" width="20.4" height="20.4" viewBox="0 0 24 24" fill="#f44336"><path d="M12 2C6.480 2 2 6.480 2 12s4.480 10 10 10 10-4.480 10-10S17.520 2 12 2zm5 11H7v-2h10v2z"/></svg>
<div style="left:818.3px;top:938px;width:125.6px;height:27px;background:#e0e0e0;border-radius:13.500px"></div>
<div style="left:818.3px;top:938px;width:27px;height:27px;background:#fff;border-radius:50%"></div>
<svg style="left:822.9px;top:943.2px" width="16.6" height="16.6" viewBox="0 0 32 32" fill="none" stroke="url(#lg)" stroke-width="3" stroke-linejoin="miter"><polygon points="1.900,9.900 30.500,1.300 23.400,29.600"/><polygon points="1.500,13.400 25.400,6.700 20.200,30.900"/></svg>
<span style="top:944px;font-size:10.5px;line-height:12px;left:851.8px;color:#1a1a1a;letter-spacing:0.13px;">João da SIlva</span>
<svg style="left:920.4px;top:941.4px;" width="20.4" height="20.4" viewBox="0 0 24 24" fill="#f44336"><path d="M12 2C6.480 2 2 6.480 2 12s4.480 10 10 10 10-4.480 10-10S17.520 2 12 2zm5 11H7v-2h10v2z"/></svg>
<div style="left:584px;top:973.2px;width:140.8px;height:27px;background:#e0e0e0;border-radius:13.500px"></div>
<svg style="left:584px;top:973.1px;" width="26.4" height="26.4" viewBox="0 0 24 24" fill="#5f5f5f"><path d="M12 2C6.480 2 2 6.480 2 12s4.480 10 10 10 10-4.480 10-10S17.520 2 12 2zm0 3c1.660 0 3 1.340 3 3s-1.340 3-3 3-3-1.340-3-3 1.340-3 3-3zm0 14.200c-2.500 0-4.710-1.280-6-3.220.030-1.990 4-3.080 6-3.080 1.990 0 5.970 1.090 6 3.080-1.290 1.940-3.500 3.220-6 3.220z"/></svg>
<span style="top:980px;font-size:10.5px;line-height:12px;left:617.5px;color:#1a1a1a;letter-spacing:0.11px;">Douglas da Silva</span>
<svg style="left:701.3px;top:976.6px;" width="20.4" height="20.4" viewBox="0 0 24 24" fill="#f44336"><path d="M12 2C6.480 2 2 6.480 2 12s4.480 10 10 10 10-4.480 10-10S17.520 2 12 2zm5 11H7v-2h10v2z"/></svg>
<div style="left:818.3px;top:973.2px;width:140.8px;height:27px;background:#e0e0e0;border-radius:13.500px"></div>
<svg style="left:818.3px;top:973.1px;" width="26.4" height="26.4" viewBox="0 0 24 24" fill="#5f5f5f"><path d="M12 2C6.480 2 2 6.480 2 12s4.480 10 10 10 10-4.480 10-10S17.520 2 12 2zm0 3c1.660 0 3 1.340 3 3s-1.340 3-3 3-3-1.340-3-3 1.340-3 3-3zm0 14.200c-2.500 0-4.710-1.280-6-3.220.030-1.990 4-3.080 6-3.080 1.990 0 5.970 1.090 6 3.080-1.290 1.940-3.500 3.220-6 3.220z"/></svg>
<span style="top:980px;font-size:10.5px;line-height:12px;left:851.8px;color:#1a1a1a;letter-spacing:0.11px;">Douglas da Silva</span>
<svg style="left:935.6px;top:976.6px;" width="20.4" height="20.4" viewBox="0 0 24 24" fill="#f44336"><path d="M12 2C6.480 2 2 6.480 2 12s4.480 10 10 10 10-4.480 10-10S17.520 2 12 2zm5 11H7v-2h10v2z"/></svg>
<span style="top:962px;font-size:12.25px;line-height:14px;left:1049.4px;transform:scaleX(0.952);letter-spacing:-0.01px;">Em andamento</span>
<span style="top:962px;font-size:12.25px;line-height:14px;left:1153.4px;letter-spacing:0.24px;">11/04/2025</span>
<svg style="left:1243.6px;top:962.1px;" width="17.2" height="17.2" viewBox="0 0 24 24" fill="#0260ff"><path d="M19 9h-4V3H9v6H5l7 7 7-7zM5 18v2h14v-2H5z"/></svg>
<span style="top:963px;font-size:11px;line-height:12px;left:1265.8px;transform:scaleX(0.93);font-weight:700;color:#0260ff;letter-spacing:-0.23px;">EXPORTAR</span>
<svg style="left:1412.3px;top:960.45px;" width="20.4" height="20.4" viewBox="0 0 24 24" fill="#bdbdbd"><path d="M1 21h4V9H1v12zm22-11c0-1.100-.9-2-2-2h-6.310l.950-4.570.030-.320c0-.410-.170-.790-.440-1.060L14.170 1 7.590 7.590C7.220 7.950 7 8.450 7 9v10c0 1.100.9 2 2 2h9c.830 0 1.540-.5 1.840-1.220l3.020-7.050c.090-.230.140-.470.140-.730v-2z"/></svg>
<svg style="left:1453.1px;top:960.3px;" width="20.4" height="20.4" viewBox="0 0 24 24" fill="#bdbdbd"><path d="M15 3H6c-.830 0-1.540.5-1.840 1.220l-3.020 7.050c-.090.230-.140.470-.140.730v2c0 1.100.9 2 2 2h6.310l-.950 4.570-.030.320c0 .410.170.790.440 1.060L9.830 23l6.590-6.590c.360-.360.580-.860.580-1.410V5c0-1.100-.9-2-2-2zm4 0v12h4V3h-4z"/></svg>
<div style="left:298.9px;top:1048px;width:1194.9px;height:1px;background:#e0e0e0"></div>
<div style="left:312px;top:1019.7px;width:14.9px;height:15px;border:1.700px solid #666;border-radius:2.500px"></div>
<span style="top:1011px;font-size:12.25px;line-height:14px;left:349.8px;transform:scaleX(0.952);">Avaliação de</span>
<span style="top:1028px;font-size:12.25px;line-height:14px;left:349.8px;transform:scaleX(0.952);letter-spacing:0.06px;">Performance Exemplo</span>
<span style="top:1019px;font-size:12.25px;line-height:14px;left:497.2px;transform:scaleX(0.902);">0,25</span>
<div style="left:584px;top:1011.8px;width:140.8px;height:27px;background:#e0e0e0;border-radius:13.500px"></div>
<svg style="left:584px;top:1011.7px;" width="26.4" height="26.4" viewBox="0 0 24 24" fill="#5f5f5f"><path d="M12 2C6.480 2 2 6.480 2 12s4.480 10 10 10 10-4.480 10-10S17.520 2 12 2zm0 3c1.660 0 3 1.340 3 3s-1.340 3-3 3-3-1.340-3-3 1.340-3 3-3zm0 14.200c-2.500 0-4.710-1.280-6-3.220.030-1.990 4-3.080 6-3.080 1.990 0 5.970 1.090 6 3.080-1.290 1.940-3.500 3.220-6 3.220z"/></svg>
<span style="top:1019px;font-size:10.5px;line-height:12px;left:617.5px;color:#1a1a1a;letter-spacing:0.11px;">Douglas da Silva</span>
<svg style="left:701.3px;top:1015.2px;" width="20.4" height="20.4" viewBox="0 0 24 24" fill="#f44336"><path d="M12 2C6.480 2 2 6.480 2 12s4.480 10 10 10 10-4.480 10-10S17.520 2 12 2zm5 11H7v-2h10v2z"/></svg>
<div style="left:818.3px;top:1011.8px;width:140.8px;height:27px;background:#e0e0e0;border-radius:13.500px"></div>
<svg style="left:818.3px;top:1011.7px;" width="26.4" height="26.4" viewBox="0 0 24 24" fill="#5f5f5f"><path d="M12 2C6.480 2 2 6.480 2 12s4.480 10 10 10 10-4.480 10-10S17.520 2 12 2zm0 3c1.660 0 3 1.340 3 3s-1.340 3-3 3-3-1.340-3-3 1.340-3 3-3zm0 14.200c-2.500 0-4.710-1.280-6-3.220.030-1.990 4-3.080 6-3.080 1.990 0 5.970 1.090 6 3.080-1.290 1.940-3.500 3.220-6 3.220z"/></svg>
<span style="top:1019px;font-size:10.5px;line-height:12px;left:851.8px;color:#1a1a1a;letter-spacing:0.11px;">Douglas da Silva</span>
<svg style="left:935.6px;top:1015.2px;" width="20.4" height="20.4" viewBox="0 0 24 24" fill="#f44336"><path d="M12 2C6.480 2 2 6.480 2 12s4.480 10 10 10 10-4.480 10-10S17.520 2 12 2zm5 11H7v-2h10v2z"/></svg>
<span style="top:1019px;font-size:12.25px;line-height:14px;left:1049.4px;transform:scaleX(0.952);letter-spacing:-0.01px;">Em andamento</span>
<span style="top:1019px;font-size:12.25px;line-height:14px;left:1153.4px;letter-spacing:0.15px;">10/04/2025</span>
<svg style="left:1243.6px;top:1019.1px;" width="17.2" height="17.2" viewBox="0 0 24 24" fill="#0260ff"><path d="M19 9h-4V3H9v6H5l7 7 7-7zM5 18v2h14v-2H5z"/></svg>
<span style="top:1020px;font-size:11px;line-height:12px;left:1265.8px;transform:scaleX(0.93);font-weight:700;color:#0260ff;letter-spacing:-0.23px;">EXPORTAR</span>
<svg style="left:1412.3px;top:1017.45px;" width="20.4" height="20.4" viewBox="0 0 24 24" fill="#bdbdbd"><path d="M1 21h4V9H1v12zm22-11c0-1.100-.9-2-2-2h-6.310l.950-4.570.030-.320c0-.410-.170-.790-.440-1.060L14.170 1 7.590 7.590C7.220 7.950 7 8.450 7 9v10c0 1.100.9 2 2 2h9c.830 0 1.540-.5 1.840-1.220l3.020-7.050c.090-.230.140-.470.140-.730v-2z"/></svg>
<svg style="left:1453.1px;top:1017.3px;" width="20.4" height="20.4" viewBox="0 0 24 24" fill="#bdbdbd"><path d="M15 3H6c-.830 0-1.540.5-1.840 1.220l-3.020 7.050c-.090.230-.140.470-.140.730v2c0 1.100.9 2 2 2h6.310l-.950 4.570-.030.320c0 .410.170.790.440 1.060L9.830 23l6.590-6.590c.360-.360.580-.860.580-1.410V5c0-1.100-.9-2-2-2zm4 0v12h4V3h-4z"/></svg>
<div style="left:298.9px;top:1089px;width:1194.9px;height:1px;background:#e0e0e0"></div>
<div style="left:312px;top:1061.7px;width:14.9px;height:15px;border:1.700px solid #666;border-radius:2.500px"></div>
<span style="top:1061px;font-size:12.25px;line-height:14px;left:349.8px;transform:scaleX(0.952);letter-spacing:-0.08px;">Avaliação Geral</span>
<span style="top:1061px;font-size:12.25px;line-height:14px;left:497.2px;transform:scaleX(0.902);letter-spacing:0.23px;">10,00</span>
<span style="top:1061px;font-size:12.25px;line-height:14px;left:1049.4px;transform:scaleX(0.952);letter-spacing:-0.01px;">Em andamento</span>
<span style="top:1061px;font-size:12.25px;line-height:14px;left:1153.4px;letter-spacing:0.15px;">10/04/2025</span>
<svg style="left:1243.6px;top:1061.1px;" width="17.2" height="17.2" viewBox="0 0 24 24" fill="#bdbdbd"><path d="M19 9h-4V3H9v6H5l7 7 7-7zM5 18v2h14v-2H5z"/></svg>
<span style="top:1062px;font-size:11px;line-height:12px;left:1265.8px;transform:scaleX(0.93);font-weight:700;color:#bdbdbd;letter-spacing:-0.23px;">EXPORTAR</span>
<svg style="left:1412.3px;top:1059.45px;" width="20.4" height="20.4" viewBox="0 0 24 24" fill="#0260ff"><path d="M1 21h4V9H1v12zm22-11c0-1.100-.9-2-2-2h-6.310l.950-4.570.030-.320c0-.410-.170-.790-.440-1.060L14.170 1 7.590 7.590C7.220 7.950 7 8.450 7 9v10c0 1.100.9 2 2 2h9c.830 0 1.540-.5 1.840-1.220l3.020-7.050c.090-.230.140-.470.140-.730v-2z"/></svg>
<svg style="left:1453.1px;top:1059.3px;" width="20.4" height="20.4" viewBox="0 0 24 24" fill="#0260ff"><path d="M15 3H6c-.830 0-1.540.5-1.840 1.220l-3.020 7.050c-.090.230-.140.470-.140.730v2c0 1.100.9 2 2 2h6.310l-.950 4.570-.030.320c0 .410.170.790.440 1.060L9.830 23l6.590-6.590c.360-.360.580-.860.580-1.410V5c0-1.100-.9-2-2-2zm4 0v12h4V3h-4z"/></svg>
<div style="left:298.9px;top:1130.4px;width:1194.9px;height:1px;background:#e0e0e0"></div>
<div style="left:312px;top:1102.7px;width:14.9px;height:15px;border:1.700px solid #666;border-radius:2.500px"></div>
<span style="top:1094px;font-size:12.25px;line-height:14px;left:349.8px;transform:scaleX(0.952);letter-spacing:0.03px;">Avaliação do dia</span>
<span style="top:1111px;font-size:12.25px;line-height:14px;left:349.8px;letter-spacing:0.15px;">02/04/2025</span>
<span style="top:1102px;font-size:12.25px;line-height:14px;left:497.2px;transform:scaleX(0.902);">0,28</span>
<div style="left:584px;top:1095.1px;width:140.8px;height:27px;background:#e0e0e0;border-radius:13.500px"></div>
<svg style="left:584px;top:1095px;" width="26.4" height="26.4" viewBox="0 0 24 24" fill="#5f5f5f"><path d="M12 2C6.480 2 2 6.480 2 12s4.480 10 10 10 10-4.480 10-10S17.520 2 12 2zm0 3c1.660 0 3 1.340 3 3s-1.340 3-3 3-3-1.340-3-3 1.340-3 3-3zm0 14.200c-2.500 0-4.710-1.280-6-3.220.030-1.990 4-3.080 6-3.080 1.990 0 5.970 1.090 6 3.080-1.290 1.940-3.500 3.220-6 3.220z"/></svg>
<span style="top:1102px;font-size:10.5px;line-height:12px;left:617.5px;color:#1a1a1a;letter-spacing:0.11px;">Douglas da Silva</span>
<svg style="left:701.3px;top:1098.3px;" width="20.4" height="20.4" viewBox="0 0 24 24" fill="#4caf50"><path d="M12 2C6.480 2 2 6.480 2 12s4.480 10 10 10 10-4.480 10-10S17.520 2 12 2zm-2 15l-5-5 1.410-1.410L10 14.170l7.590-7.590L19 8l-9 9z"/></svg>
<div style="left:818.3px;top:1095.1px;width:140.8px;height:27px;background:#e0e0e0;border-radius:13.500px"></div>
<svg style="left:818.3px;top:1095px;" width="26.4" height="26.4" viewBox="0 0 24 24" fill="#5f5f5f"><path d="M12 2C6.480 2 2 6.480 2 12s4.480 10 10 10 10-4.480 10-10S17.520 2 12 2zm0 3c1.660 0 3 1.340 3 3s-1.340 3-3 3-3-1.340-3-3 1.340-3 3-3zm0 14.200c-2.500 0-4.710-1.280-6-3.220.030-1.990 4-3.080 6-3.080 1.990 0 5.970 1.090 6 3.080-1.290 1.940-3.500 3.220-6 3.220z"/></svg>
<span style="top:1102px;font-size:10.5px;line-height:12px;left:851.8px;color:#1a1a1a;letter-spacing:0.11px;">Douglas da Silva</span>
<svg style="left:935.6px;top:1098.3px;" width="20.4" height="20.4" viewBox="0 0 24 24" fill="#4caf50"><path d="M12 2C6.480 2 2 6.480 2 12s4.480 10 10 10 10-4.480 10-10S17.520 2 12 2zm-2 15l-5-5 1.410-1.410L10 14.170l7.590-7.590L19 8l-9 9z"/></svg>
<span style="top:1102px;font-size:12.25px;line-height:14px;left:1049.4px;transform:scaleX(0.952);letter-spacing:-0.06px;">Aprovado</span>
<span style="top:1102px;font-size:12.25px;line-height:14px;left:1153.4px;letter-spacing:0.15px;">02/04/2025</span>
<svg style="left:1243.6px;top:1102.1px;" width="17.2" height="17.2" viewBox="0 0 24 24" fill="#0260ff"><path d="M19 9h-4V3H9v6H5l7 7 7-7zM5 18v2h14v-2H5z"/></svg>
<span style="top:1103px;font-size:11px;line-height:12px;left:1265.8px;transform:scaleX(0.93);font-weight:700;color:#0260ff;letter-spacing:-0.23px;">EXPORTAR</span>
<svg style="left:1412.3px;top:1100.45px;" width="20.4" height="20.4" viewBox="0 0 24 24" fill="#0260ff"><path d="M1 21h4V9H1v12zm22-11c0-1.100-.9-2-2-2h-6.310l.950-4.570.030-.320c0-.410-.170-.790-.440-1.060L14.170 1 7.590 7.590C7.220 7.950 7 8.450 7 9v10c0 1.100.9 2 2 2h9c.830 0 1.540-.5 1.840-1.220l3.020-7.050c.090-.230.140-.470.140-.730v-2z"/></svg>
<svg style="left:1453.1px;top:1100.3px;" width="20.4" height="20.4" viewBox="0 0 24 24" fill="#0260ff"><path d="M15 3H6c-.830 0-1.540.5-1.840 1.220l-3.020 7.050c-.090.230-.140.470-.140.730v2c0 1.100.9 2 2 2h6.310l-.950 4.570-.030.320c0 .410.170.790.440 1.060L9.830 23l6.590-6.590c.360-.360.580-.860.580-1.410V5c0-1.100-.9-2-2-2zm4 0v12h4V3h-4z"/></svg>
<div style="left:298.9px;top:1172.3px;width:1194.9px;height:1px;background:#e0e0e0"></div>
<div style="left:312px;top:1143.7px;width:14.9px;height:15px;border:1.700px solid #666;border-radius:2.500px"></div>
<span style="top:1135px;font-size:12.25px;line-height:14px;left:349.8px;transform:scaleX(0.952);letter-spacing:0.03px;">Avaliação do dia</span>
<span style="top:1152px;font-size:12.25px;line-height:14px;left:349.8px;letter-spacing:0.15px;">02/04/2025</span>
<span style="top:1143px;font-size:12.25px;line-height:14px;left:497.2px;transform:scaleX(0.902);">0,25</span>
<div style="left:584px;top:1136.4px;width:140.8px;height:27px;background:#e0e0e0;border-radius:13.500px"></div>
<svg style="left:584px;top:1136.3px;" width="26.4" height="26.4" viewBox="0 0 24 24" fill="#5f5f5f"><path d="M12 2C6.480 2 2 6.480 2 12s4.480 10 10 10 10-4.480 10-10S17.520 2 12 2zm0 3c1.660 0 3 1.340 3 3s-1.340 3-3 3-3-1.340-3-3 1.340-3 3-3zm0 14.200c-2.500 0-4.710-1.280-6-3.220.030-1.990 4-3.080 6-3.080 1.990 0 5.970 1.090 6 3.080-1.290 1.940-3.500 3.220-6 3.220z"/></svg>
<span style="top:1143px;font-size:10.5px;line-height:12px;left:617.5px;color:#1a1a1a;letter-spacing:0.11px;">Douglas da Silva</span>
<svg style="left:701.3px;top:1139.8px;" width="20.4" height="20.4" viewBox="0 0 24 24" fill="#f44336"><path d="M12 2C6.480 2 2 6.480 2 12s4.480 10 10 10 10-4.480 10-10S17.520 2 12 2zm5 11H7v-2h10v2z"/></svg>
<div style="left:818.3px;top:1136.4px;width:140.8px;height:27px;background:#e0e0e0;border-radius:13.500px"></div>
<svg style="left:818.3px;top:1136.3px;" width="26.4" height="26.4" viewBox="0 0 24 24" fill="#5f5f5f"><path d="M12 2C6.480 2 2 6.480 2 12s4.480 10 10 10 10-4.480 10-10S17.520 2 12 2zm0 3c1.660 0 3 1.340 3 3s-1.340 3-3 3-3-1.340-3-3 1.340-3 3-3zm0 14.200c-2.500 0-4.710-1.280-6-3.220.030-1.990 4-3.080 6-3.080 1.990 0 5.970 1.090 6 3.080-1.290 1.940-3.500 3.220-6 3.220z"/></svg>
<span style="top:1143px;font-size:10.5px;line-height:12px;left:851.8px;color:#1a1a1a;letter-spacing:0.11px;">Douglas da Silva</span>
<svg style="left:935.6px;top:1139.8px;" width="20.4" height="20.4" viewBox="0 0 24 24" fill="#f44336"><path d="M12 2C6.480 2 2 6.480 2 12s4.480 10 10 10 10-4.480 10-10S17.520 2 12 2zm5 11H7v-2h10v2z"/></svg>
<span style="top:1143px;font-size:12.25px;line-height:14px;left:1049.4px;transform:scaleX(0.952);letter-spacing:-0.01px;">Em andamento</span>
<span style="top:1143px;font-size:12.25px;line-height:14px;left:1153.4px;letter-spacing:0.15px;">02/04/2025</span>
<svg style="left:1243.6px;top:1143.1px;" width="17.2" height="17.2" viewBox="0 0 24 24" fill="#0260ff"><path d="M19 9h-4V3H9v6H5l7 7 7-7zM5 18v2h14v-2H5z"/></svg>
<span style="top:1144px;font-size:11px;line-height:12px;left:1265.8px;transform:scaleX(0.93);font-weight:700;color:#0260ff;letter-spacing:-0.23px;">EXPORTAR</span>
<svg style="left:1412.3px;top:1141.45px;" width="20.4" height="20.4" viewBox="0 0 24 24" fill="#bdbdbd"><path d="M1 21h4V9H1v12zm22-11c0-1.100-.9-2-2-2h-6.310l.950-4.570.030-.320c0-.410-.170-.790-.440-1.060L14.170 1 7.590 7.590C7.220 7.950 7 8.450 7 9v10c0 1.100.9 2 2 2h9c.830 0 1.540-.5 1.840-1.220l3.020-7.050c.090-.230.140-.470.140-.730v-2z"/></svg>
<svg style="left:1453.1px;top:1141.3px;" width="20.4" height="20.4" viewBox="0 0 24 24" fill="#bdbdbd"><path d="M15 3H6c-.830 0-1.540.5-1.840 1.220l-3.020 7.050c-.090.230-.140.470-.140.730v2c0 1.100.9 2 2 2h6.310l-.950 4.570-.030.320c0 .410.170.790.440 1.060L9.830 23l6.590-6.590c.360-.360.580-.860.580-1.410V5c0-1.100-.9-2-2-2zm4 0v12h4V3h-4z"/></svg>
<div style="left:298.9px;top:1213px;width:1194.9px;height:1px;background:#e0e0e0"></div>
<div style="left:312px;top:1185.7px;width:14.9px;height:15px;border:1.700px solid #666;border-radius:2.500px"></div>
<span style="top:1177px;font-size:12.25px;line-height:14px;left:349.8px;transform:scaleX(0.952);letter-spacing:0.03px;">Avaliação do dia</span>
<span style="top:1194px;font-size:12.25px;line-height:14px;left:349.8px;letter-spacing:0.15px;">01/04/2025</span>
<span style="top:1185px;font-size:12.25px;line-height:14px;left:497.2px;transform:scaleX(0.902);">9,72</span>
<div style="left:584px;top:1177.9px;width:140.8px;height:27px;background:#e0e0e0;border-radius:13.500px"></div>
<svg style="left:584px;top:1177.8px;" width="26.4" height="26.4" viewBox="0 0 24 24" fill="#5f5f5f"><path d="M12 2C6.480 2 2 6.480 2 12s4.480 10 10 10 10-4.480 10-10S17.520 2 12 2zm0 3c1.660 0 3 1.340 3 3s-1.340 3-3 3-3-1.340-3-3 1.340-3 3-3zm0 14.200c-2.500 0-4.710-1.280-6-3.220.030-1.990 4-3.080 6-3.080 1.990 0 5.970 1.090 6 3.080-1.290 1.940-3.500 3.220-6 3.220z"/></svg>
<span style="top:1185px;font-size:10.5px;line-height:12px;left:617.5px;color:#1a1a1a;letter-spacing:0.11px;">Douglas da Silva</span>
<svg style="left:701.3px;top:1181.1px;" width="20.4" height="20.4" viewBox="0 0 24 24" fill="#4caf50"><path d="M12 2C6.480 2 2 6.480 2 12s4.480 10 10 10 10-4.480 10-10S17.520 2 12 2zm-2 15l-5-5 1.410-1.410L10 14.170l7.590-7.590L19 8l-9 9z"/></svg>
<div style="left:818.3px;top:1177.9px;width:140.8px;height:27px;background:#e0e0e0;border-radius:13.500px"></div>
<svg style="left:818.3px;top:1177.8px;" width="26.4" height="26.4" viewBox="0 0 24 24" fill="#5f5f5f"><path d="M12 2C6.480 2 2 6.480 2 12s4.480 10 10 10 10-4.480 10-10S17.520 2 12 2zm0 3c1.660 0 3 1.340 3 3s-1.340 3-3 3-3-1.340-3-3 1.340-3 3-3zm0 14.200c-2.500 0-4.710-1.280-6-3.220.030-1.990 4-3.080 6-3.080 1.990 0 5.970 1.090 6 3.080-1.290 1.940-3.500 3.220-6 3.220z"/></svg>
<span style="top:1185px;font-size:10.5px;line-height:12px;left:851.8px;color:#1a1a1a;letter-spacing:0.11px;">Douglas da Silva</span>
<svg style="left:935.6px;top:1181.1px;" width="20.4" height="20.4" viewBox="0 0 24 24" fill="#4caf50"><path d="M12 2C6.480 2 2 6.480 2 12s4.480 10 10 10 10-4.480 10-10S17.520 2 12 2zm-2 15l-5-5 1.410-1.410L10 14.170l7.590-7.590L19 8l-9 9z"/></svg>
<span style="top:1185px;font-size:12.25px;line-height:14px;left:1049.4px;transform:scaleX(0.952);letter-spacing:-0.06px;">Aprovado</span>
<span style="top:1185px;font-size:12.25px;line-height:14px;left:1153.4px;letter-spacing:0.15px;">01/04/2025</span>
<svg style="left:1243.6px;top:1185.1px;" width="17.2" height="17.2" viewBox="0 0 24 24" fill="#0260ff"><path d="M19 9h-4V3H9v6H5l7 7 7-7zM5 18v2h14v-2H5z"/></svg>
<span style="top:1186px;font-size:11px;line-height:12px;left:1265.8px;transform:scaleX(0.93);font-weight:700;color:#0260ff;letter-spacing:-0.23px;">EXPORTAR</span>
<svg style="left:1412.3px;top:1183.45px;" width="20.4" height="20.4" viewBox="0 0 24 24" fill="#0260ff"><path d="M1 21h4V9H1v12zm22-11c0-1.100-.9-2-2-2h-6.310l.950-4.570.030-.320c0-.410-.170-.790-.440-1.060L14.170 1 7.590 7.590C7.220 7.950 7 8.450 7 9v10c0 1.100.9 2 2 2h9c.830 0 1.540-.5 1.840-1.220l3.020-7.050c.090-.230.140-.470.140-.730v-2z"/></svg>
<svg style="left:1453.1px;top:1183.3px;" width="20.4" height="20.4" viewBox="0 0 24 24" fill="#0260ff"><path d="M15 3H6c-.830 0-1.540.5-1.840 1.220l-3.020 7.050c-.090.230-.140.470-.140.730v2c0 1.100.9 2 2 2h6.310l-.950 4.570-.030.320c0 .410.170.790.440 1.060L9.830 23l6.590-6.590c.360-.360.580-.860.580-1.410V5c0-1.100-.9-2-2-2zm4 0v12h4V3h-4z"/></svg>
<svg style="left:295.3px;top:775.2px" width="1201.7" height="79.8"><rect x="1.75" y="1.75" width="1198.2" height="76.3" fill="none" stroke="#fb0000" stroke-width="3.5" stroke-dasharray="11.8 4.25"/></svg>
<span style="top:1231px;font-size:10.5px;line-height:12px;left:1298.5px;transform:scaleX(0.961);color:#858585;">Itens por página</span>
<span style="top:1231px;font-size:10.5px;line-height:12px;left:1385px;transform:scaleX(0.924);color:#858585;">25</span>
<svg style="left:1397px;top:1235.9px" width="8.400" height="4.200" viewBox="0 0 10 5"><path d="M0 0h10L5 5z" fill="#757575"/></svg>
<span style="top:1231px;font-size:10.5px;line-height:12px;left:1439.7px;transform:scaleX(0.906);color:#858585;">1-9 de 9</span>
</div>
</body></html>
